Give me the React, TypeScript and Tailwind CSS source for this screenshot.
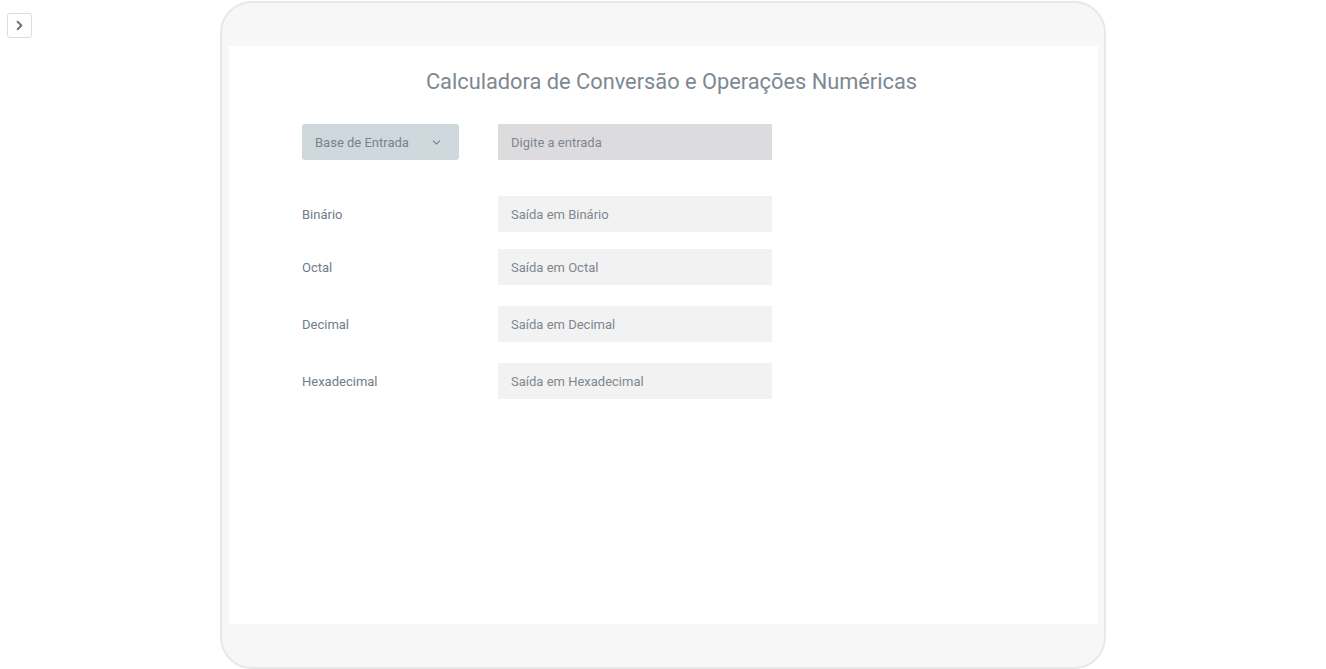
import { ChevronDown, ChevronRight } from 'lucide-react';

const outputs = [
    { label: 'Binário', placeholder: 'Saída em Binário', mt: 'mt-[36px]' },
    { label: 'Octal', placeholder: 'Saída em Octal', mt: 'mt-[17px]' },
    { label: 'Decimal', placeholder: 'Saída em Decimal', mt: 'mt-[21px]' },
    { label: 'Hexadecimal', placeholder: 'Saída em Hexadecimal', mt: 'mt-[21px]' }
];

const App = () => {
    return (
        <div
            className="relative min-h-[669px] w-full bg-white"
            style={{ fontFamily: 'Roboto, "Liberation Sans", sans-serif' }}
        >
            <button className="absolute left-[7px] top-[12px] flex h-[25px] w-[25px] items-center justify-center rounded-[3px] border border-[#dcdcdc] bg-white text-[#6b7280]">
                <ChevronRight size={15} strokeWidth={3} />
            </button>

            <div className="ml-[220px] mt-[1px] flex h-[668px] w-[886px] flex-col rounded-[32px] border-2 border-[#e8e8e8] bg-[#f7f7f7] pb-[43px] pl-[7px] pr-[6px] pt-[43px]">
                <div className="flex-1 bg-white pl-[73px] pr-[57px] pt-[21px]">
                    <h1 className="text-center text-[21.8px] font-normal leading-[30px] text-[#7d8892]">
                        Calculadora de Conversão e Operações Numéricas
                    </h1>

                    <div className="mt-[27px] flex items-center gap-[39px]">
                        <div className="flex h-[36px] w-[157px] items-center justify-between rounded-[3px] bg-[#cfd8dd] pl-[13px] pr-[16px] pt-[1px] text-[13px] text-[#76828d]">
                            <span>Base de Entrada</span>
                            <ChevronDown size={13} strokeWidth={2} />
                        </div>
                        <div className="flex h-[36px] w-[274px] items-center bg-[#dcdcde] px-[13px] pt-[1px] text-[13px] text-[#7e8790]">
                            Digite a entrada
                        </div>
                    </div>

                    {outputs.map((o) => (
                        <div
                            key={o.label}
                            className={`${o.mt} flex items-center gap-[39px]`}
                        >
                            <div className="w-[157px] pt-[1px] text-[13px] text-[#717c87]">
                                {o.label}
                            </div>
                            <div className="flex h-[36px] w-[274px] items-center bg-[#f2f2f2] px-[13px] pt-[1px] text-[13px] text-[#7e8790]">
                                {o.placeholder}
                            </div>
                        </div>
                    ))}
                </div>
            </div>
        </div>
    );
};

export default App;
